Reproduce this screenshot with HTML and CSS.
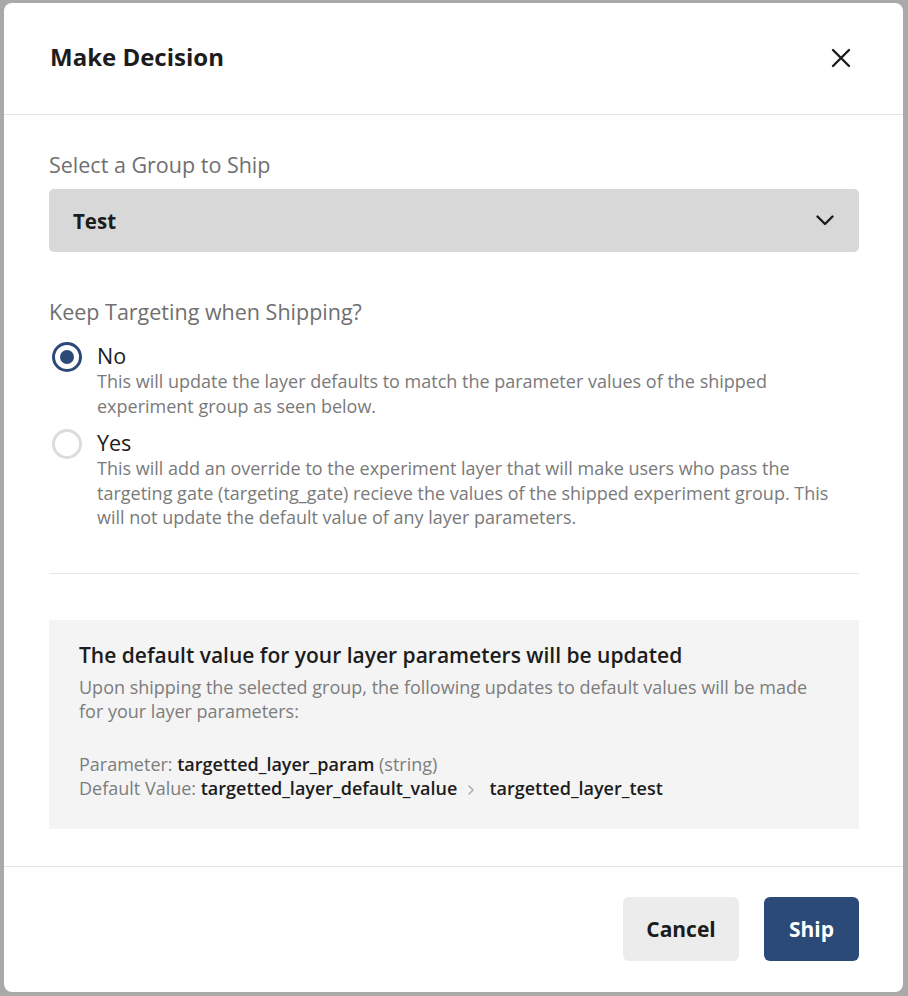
FILE: index.html
```html
<!DOCTYPE html>
<html>
<head>
<meta charset="utf-8">
<link rel="stylesheet" href="styles.css">
</head>
<body>
<div class="modal">
  <div class="modal-header">
    <h1 class="modal-title">Make Decision</h1>
    <button class="close-btn" aria-label="Close">
      <svg width="20" height="20" viewBox="0 0 20 20"><path d="M2 2 L18 18 M18 2 L2 18" stroke="#1c1c1c" stroke-width="2.4" stroke-linecap="round"/></svg>
    </button>
  </div>
  <div class="modal-body">
    <div class="field-label">Select a Group to Ship</div>
    <div class="select">
      <span class="select-value">Test</span>
      <svg width="18" height="11" viewBox="0 0 18 11"><path d="M1.5 1.5 L9 9 L16.5 1.5" fill="none" stroke="#1c1c1c" stroke-width="2.4" stroke-linecap="round" stroke-linejoin="round"/></svg>
    </div>
    <div class="field-label targeting-label">Keep Targeting when Shipping?</div>
    <div class="radio-group">
      <div class="radio-row">
        <span class="radio checked"><span class="dot"></span></span>
        <div class="radio-text">
          <div class="radio-title">No</div>
          <div class="radio-desc">This will update the layer defaults to match the parameter values of the shipped experiment group as seen below.</div>
        </div>
      </div>
      <div class="radio-row">
        <span class="radio"></span>
        <div class="radio-text">
          <div class="radio-title">Yes</div>
          <div class="radio-desc">This will add an override to the experiment layer that will make users who pass the targeting gate (targeting_gate) recieve the values of the shipped experiment group. This will not update the default value of any layer parameters.</div>
        </div>
      </div>
    </div>
    <hr class="divider">
    <div class="info-box">
      <div class="info-title">The default value for your layer parameters will be updated</div>
      <div class="info-desc">Upon shipping the selected group, the following updates to default values will be made for your layer parameters:</div>
      <div class="param-block">
        <div>Parameter: <b>targetted_layer_param</b> (string)</div>
        <div>Default Value: <b>targetted_layer_default_value</b><span class="arrow"><svg width="8" height="12" viewBox="0 0 8 12"><path d="M2 2 L6 6 L2 10" fill="none" stroke="#a8a8a8" stroke-width="1.4" stroke-linecap="round" stroke-linejoin="round"/></svg></span><b>targetted_layer_test</b></div>
      </div>
    </div>
  </div>
  <div class="modal-footer">
    <button class="btn btn-cancel">Cancel</button>
    <button class="btn btn-ship">Ship</button>
  </div>
</div>
</body>
</html>
```
FILE: styles.css
```css
* { box-sizing: border-box; }
html, body { height: 100%; }
body {
  margin: 0;
  padding: 3px 5px 4px 4px;
  background: #a9a9a9;
  font-family: "Open Sans", "Noto Sans", sans-serif;
  color: #1c1c1c;
}
.modal {
  background: #fff;
  border-radius: 8px;
  height: 100%;
  display: flex;
  flex-direction: column;
  overflow: hidden;
}
.modal-header {
  height: 112px;
  flex: none;
  display: flex;
  align-items: center;
  justify-content: space-between;
  padding: 0 52px 4px 46px;
  border-bottom: 1px solid #e4e4e4;
}
.modal-title {
  margin: 0;
  font-size: 24px;
  line-height: 32px;
  font-weight: 700;
  color: #1c1c1c;
}
.close-btn {
  border: 0;
  background: none;
  padding: 0;
  width: 20px;
  height: 20px;
  display: flex;
  margin-top: 2px;
}
.modal-body {
  flex: 1;
  padding: 36px 44px 0 45px;
}
.field-label {
  font-size: 21.5px;
  line-height: 27px;
  color: #6f6f6f;
}
.select {
  margin-top: 11px;
  height: 63px;
  background: #d8d8d8;
  border-radius: 5px;
  display: flex;
  align-items: center;
  justify-content: space-between;
  padding: 0 25px 0 24px;
}
.select-value {
  font-size: 20.5px;
  font-weight: 700;
  color: #1c1c1c;
}
.targeting-label { margin-top: 46px; }
.radio-group {
  margin-top: 17px;
  display: flex;
  flex-direction: column;
  gap: 11px;
}
.radio-row {
  display: flex;
  align-items: flex-start;
  gap: 15px;
}
.radio {
  flex: none;
  width: 30px;
  height: 30px;
  margin-left: 3px;
  border-radius: 50%;
  border: 3px solid #dcdcdc;
  display: flex;
  align-items: center;
  justify-content: center;
}
.radio.checked { border-color: #2b4a78; }
.radio .dot {
  width: 14px;
  height: 14px;
  border-radius: 50%;
  background: #2b4a78;
}
.radio-title {
  font-size: 21.5px;
  line-height: 27px;
  color: #1c1c1c;
}
.radio-desc {
  font-size: 18px;
  line-height: 24.5px;
  color: #7a7a7a;
}
.divider {
  margin: 43px 0 0;
  border: 0;
  border-top: 1px solid #e6e6e6;
}
.info-box {
  margin-top: 46px;
  background: #f4f4f4;
  padding: 22px 30px 28px 30px;
}
.info-title {
  font-size: 21px;
  line-height: 27px;
  font-weight: 600;
  color: #1c1c1c;
}
.info-desc {
  margin-top: 6px;
  font-size: 18px;
  line-height: 24px;
  color: #7d7d7d;
}
.param-block {
  margin-top: 29px;
  font-size: 18px;
  line-height: 24px;
  color: #7d7d7d;
}
.param-block b {
  font-weight: 600;
  color: #1c1c1c;
}
.arrow {
  display: inline-block;
  margin: 0 14px 0 10px;
  vertical-align: -1px;
}
.modal-footer {
  flex: none;
  border-top: 1px solid #e4e4e4;
  padding: 30px 44px 31px;
  display: flex;
  justify-content: flex-end;
  gap: 25px;
}
.btn {
  height: 64px;
  border: 0;
  border-radius: 6px;
  font-family: inherit;
  font-size: 21px;
  font-weight: 700;
  padding: 0;
}
.btn-cancel { background: #ececec; color: #1c1c1c; width: 116px; }
.btn-ship { background: #2b4a78; color: #fff; width: 95px; }
```
